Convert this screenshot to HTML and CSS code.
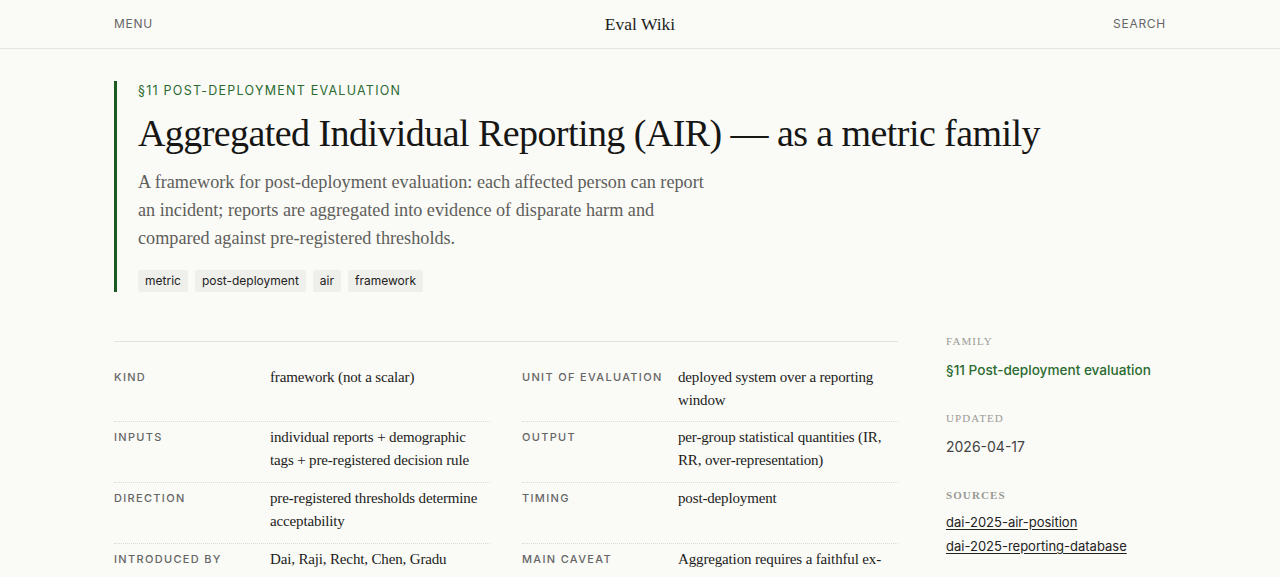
FILE: index.html
```html
<!DOCTYPE html>
<html>
<head>
  <title>Aggregated Individual Reporting (AIR) — Eval Wiki</title>
  <meta charset="UTF-8" />
  <link rel="stylesheet" href="styles.css">
</head>
<body>
  <header class="topbar">
    <a class="topbar-link" href="#">Menu</a>
    <a class="brand" href="#">Eval Wiki</a>
    <a class="topbar-link topbar-right" href="#">Search</a>
  </header>

  <main class="page">
    <section class="hero">
      <div class="eyebrow">§11 Post-deployment evaluation</div>
      <h1 class="title">Aggregated Individual Reporting (AIR) — as a metric family</h1>
      <p class="lede">A framework for post-deployment evaluation: each affected person can report an incident; reports are aggregated into evidence of disparate harm and compared against pre-registered thresholds.</p>
      <div class="tags">
        <span class="tag">metric</span>
        <span class="tag">post-deployment</span>
        <span class="tag">air</span>
        <span class="tag">framework</span>
      </div>
    </section>

    <div class="layout">
      <div class="facts">
        <div class="fact">
          <div class="fact-label">Kind</div>
          <div class="fact-value">framework (not a scalar)</div>
        </div>
        <div class="fact">
          <div class="fact-label">Unit of evaluation</div>
          <div class="fact-value">deployed system over a reporting window</div>
        </div>
        <div class="fact">
          <div class="fact-label">Inputs</div>
          <div class="fact-value">individual reports + demographic tags + pre-registered decision rule</div>
        </div>
        <div class="fact">
          <div class="fact-label">Output</div>
          <div class="fact-value">per-group statistical quantities (IR, RR, over-representation)</div>
        </div>
        <div class="fact">
          <div class="fact-label">Direction</div>
          <div class="fact-value">pre-registered thresholds determine acceptability</div>
        </div>
        <div class="fact">
          <div class="fact-label">Timing</div>
          <div class="fact-value">post-deployment</div>
        </div>
        <div class="fact">
          <div class="fact-label">Introduced by</div>
          <div class="fact-value">Dai, Raji, Recht, Chen, Gradu (Berkeley et al.), 2025</div>
        </div>
        <div class="fact">
          <div class="fact-label">Main caveat</div>
          <div class="fact-value">Aggregation requires a faithful ex-ante sampling model; reports are self-selected</div>
        </div>
      </div>

      <aside class="sidebar">
        <div class="side-block">
          <div class="side-label">Family</div>
          <a class="side-family" href="#">§11 Post-deployment evaluation</a>
        </div>
        <div class="side-block">
          <div class="side-label">Updated</div>
          <div class="side-text">2026-04-17</div>
        </div>
        <div class="side-block">
          <div class="side-label side-label-strong">Sources</div>
          <a class="side-link" href="#">dai-2025-air-position</a>
          <a class="side-link" href="#">dai-2025-reporting-database</a>
        </div>
      </aside>
    </div>
  </main>
</body>
</html>
```

FILE: styles.css
```css
body {
  margin: 0;
  background: #fafaf7;
  color: #1c1c1a;
  font-family: Inter, "Liberation Sans", sans-serif;
}

a {
  color: inherit;
  text-decoration: none;
}

/* Top bar */
.topbar {
  display: grid;
  grid-template-columns: 1fr auto 1fr;
  align-items: center;
  height: 48px;
  padding: 0 114px;
  border-bottom: 1px solid #e6e6e1;
}

.topbar-link {
  font-size: 12px;
  letter-spacing: 0.06em;
  text-transform: uppercase;
  color: #666;
  margin-top: -1px;
}

.topbar-right {
  justify-self: end;
}

.brand {
  font-family: "Liberation Serif", serif;
  font-size: 17.5px;
  color: #1c1c1a;
}

/* Page */
.page {
  max-width: 1052px;
  margin: 0 auto;
  padding-top: 32px;
}

.hero {
  border-left: 3px solid #1d5a22;
  padding: 0 0 0 21px;
  margin-bottom: 42px;
}

.eyebrow {
  font-size: 12.5px;
  letter-spacing: 0.1em;
  text-transform: uppercase;
  color: #2a6b2f;
  line-height: 16px;
  padding-top: 2px;
}

.title {
  font-family: "Liberation Serif", serif;
  font-weight: normal;
  font-size: 38px;
  letter-spacing: -0.015em;
  line-height: 48px;
  margin: 10px 0 11px;
  color: #161614;
}

.lede {
  font-family: "Liberation Serif", serif;
  font-size: 18.2px;
  line-height: 28px;
  color: #5e5e5a;
  max-width: 575px;
  margin: 0 0 18px;
}

.tags {
  display: flex;
  gap: 7px;
}

.tag {
  background: #efefeb;
  font-size: 12px;
  line-height: 22px;
  padding: 0 7px;
  border-radius: 2px;
  color: #222;
}

/* Facts + sidebar */
.layout {
  display: grid;
  grid-template-columns: 784px 220px;
  gap: 48px;
  align-items: start;
}

.facts {
  display: grid;
  grid-template-columns: 1fr 1fr;
  column-gap: 32px;
  margin-top: 7px;
  border-top: 1px solid #e4e4df;
  padding-top: 20px;
}

.fact {
  display: grid;
  grid-template-columns: 156px 1fr;
  padding: 4px 0 11px;
  border-top: 1px dotted #dcdcd6;
}

.fact:nth-child(1),
.fact:nth-child(2) {
  border-top: none;
  padding-bottom: 10px;
}

.fact-label {
  font-size: 11px;
  font-weight: 500;
  letter-spacing: 0.12em;
  text-transform: uppercase;
  color: #666;
  line-height: 22.5px;
}

.fact-value {
  font-family: "Liberation Serif", serif;
  font-size: 15px;
  letter-spacing: -0.15px;
  line-height: 22.5px;
  color: #1c1c1a;
}

.side-block {
  margin-bottom: 31px;
}

.side-label {
  font-family: "Liberation Serif", serif;
  font-size: 11px;
  letter-spacing: 0.1em;
  text-transform: uppercase;
  color: #9a9a95;
  line-height: 14px;
  margin-bottom: 12px;
}

.side-label-strong {
  font-weight: bold;
  margin-bottom: 8px;
}

.side-family {
  display: block;
  font-size: 13.6px;
  font-weight: 500;
  color: #2a6b2f;
  line-height: 20px;
}

.side-text {
  font-size: 14px;
  color: #444;
  line-height: 20px;
}

.side-link {
  display: block;
  font-size: 13px;
  line-height: 24px;
  color: #222;
  text-decoration: underline;
  text-underline-offset: 2px;
}
```
